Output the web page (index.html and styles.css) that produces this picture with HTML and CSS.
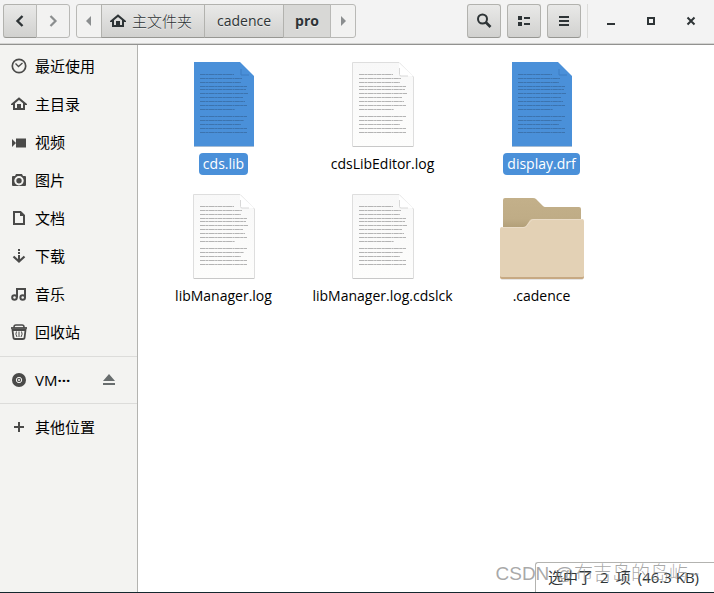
FILE: index.html
```html
<!DOCTYPE html>
<html lang="zh-CN">
<head>
<meta charset="utf-8">
<title>pro</title>
<link rel="stylesheet" href="styles.css">
</head>
<body>
<svg class="defs" aria-hidden="true">
  <defs>
    <symbol id="home" viewBox="0 0 16 16"><path d="M8 1.200 0 8v1h2v5h12V9h2V8L8 1.200zm0 2.700 4 3.400V12h-2V8H6v4H4V7.300z" fill="currentColor" fill-rule="evenodd"/><path d="M7 9h2v4H7z" fill="currentColor"/></symbol>
    <linearGradient id="back-shade" x1="0" y1="0" x2="0" y2="1"><stop offset="0" stop-color="#c3b08a"/><stop offset=".6" stop-color="#bfac86"/><stop offset="1" stop-color="#aa966f"/></linearGradient>
    <linearGradient id="paper" x1="0" y1="0" x2="0" y2="1"><stop offset="0" stop-color="#f8f8f8"/><stop offset="1" stop-color="#fdfdfc"/></linearGradient>
    <symbol id="writing" viewBox="0 0 64 88">
      <g fill="none" stroke="currentColor" stroke-width="1" stroke-dasharray="5 .4 3 .3 6 .4 2 .3">
        <path d="M8 13.500h34M8 17.500h42M8 21.500h41M8 25.500h47M8 28.500h46M8 32.500h48M8 36.500h43M8 40.500h45M8 44.500h47M8 48.500h35M8 55.500h47M8 59.500h44M8 63.500h41M8 67.500h47M8 71.500h47"/>
      </g>
    </symbol>
    <symbol id="doc" viewBox="0 0 64 88">
      <path d="M2 1.500h46L62.500 16v69.500h-61V1.500z" fill="url(#paper)" stroke="#dedede"/>
      <path d="M48 2v11.500q0 1.500 1.500 1.500H62z" fill="#fff"/>
      <path d="M48.500 7v6.500q0 1.500 1.500 1.500h7" fill="none" stroke="#d8d8d8"/>
      <path d="M2 85.500h60" stroke="#c8c8c8"/>
      <use href="#writing" color="#b4b4b4"/>
    </symbol>
    <symbol id="doc-selected" viewBox="0 0 64 88">
      <path d="M2 3h46l14 14v69H2z" fill="#386ba2" opacity=".45"/>
      <path d="M2 1h46l14 14v70H2z" fill="#4a90d9"/>
      <path d="M49 8v6h8" fill="none" stroke="#3d7dc2"/>
      <use href="#writing" color="#3c73ae"/>
    </symbol>
  </defs>
</svg>
<div class="window">
  <header class="bar">
    <div class="group">
      <button class="btn nav" aria-label="后退"><svg width="16" height="16"><path d="M10.500 3 5.500 8l5 5" fill="none" stroke="currentColor" stroke-width="2.400"/></svg></button>
      <button class="btn nav flat" aria-label="前进" disabled><svg width="16" height="16"><path d="m5.500 3 5 5-5 5" fill="none" stroke="currentColor" stroke-width="2.200"/></svg></button>
    </div>
    <nav class="group path">
      <button class="btn arrow flat" aria-label="向左"><svg width="8" height="10"><path d="M6 0v10L1 5z" fill="currentColor"/></svg></button>
      <button class="btn crumb home"><svg width="16" height="16"><use href="#home"/></svg><span>主文件夹</span></button>
      <button class="btn crumb">cadence</button>
      <button class="btn crumb current">pro</button>
      <button class="btn arrow flat" aria-label="向右"><svg width="8" height="10"><path d="M2 0v10l5-5z" fill="currentColor"/></svg></button>
    </nav>
    <div class="tools">
      <button class="btn tool" aria-label="搜索"><svg width="16" height="16"><g fill="none" stroke="currentColor"><circle cx="6.500" cy="6" r="4.500" stroke-width="2"/><path d="m9.500 9 5 5" stroke-width="2.600"/></g></svg></button>
      <button class="btn tool" aria-label="列表视图"><svg width="16" height="16"><path d="M2 3h4v4H2zM2 9h4v4H2zM8 4h6v2H8zM8 10h6v2H8z" fill="currentColor"/></svg></button>
      <button class="btn tool" aria-label="菜单"><svg width="16" height="16"><path d="M3 3h10v2H3zM3 7h10v2H3zM3 11h10v2H3z" fill="currentColor"/></svg></button>
    </div>
    <div class="controls">
      <button aria-label="最小化"><svg width="16" height="16"><path d="M4 10h8v2H4z" fill="currentColor"/></svg></button>
      <button aria-label="最大化"><svg width="16" height="16"><path d="M5 5h6v6H5z" fill="none" stroke="currentColor" stroke-width="2"/></svg></button>
      <button aria-label="关闭"><svg width="16" height="16"><path d="m4.500 4.500 7 7m0-7-7 7" stroke="currentColor" stroke-width="2"/></svg></button>
    </div>
  </header>
  <div class="body">
    <aside class="side">
      <ul>
        <li><svg width="16" height="16"><g fill="none" stroke="currentColor"><circle cx="8" cy="8" r="6.700" stroke-width="1.700"/><path d="M4.500 5.500 7.500 8.500l4-3.500" stroke-width="1.300"/></g></svg>最近使用</li>
        <li><svg width="16" height="16"><use href="#home"/></svg>主目录</li>
        <li><svg width="16" height="16"><path d="M5 4.500h10v9H5zM1 5l4 4-4 4z" fill="currentColor"/></svg>视频</li>
        <li><svg width="16" height="16"><path fill-rule="evenodd" d="M5 2h6l1 2h2q1 0 1 1v8q0 1-1 1H2q-1 0-1-1V5q0-1 1-1h2zm3 2.500a4.200 4.200 0 1 0 0 8.400 4.200 4.200 0 0 0 0-8.400zm0 1.500a2.700 2.700 0 1 1 0 5.400A2.700 2.700 0 0 1 8 6z" fill="currentColor"/><circle cx="8" cy="8.700" r="4" fill="none" stroke="#f3f3f1" stroke-width="1.400"/><circle cx="8" cy="8.700" r="1.200" fill="currentColor"/></svg>图片</li>
        <li><svg width="16" height="16"><path d="M3 2h6.500L13 5.500V14H3z" fill="none" stroke="currentColor" stroke-width="2"/><path d="M9 2v4h4z" fill="currentColor"/></svg>文档</li>
        <li><svg width="16" height="16"><path d="M7 1h2v2H7zM7 4h2v2H7zM7 7h2v5H7z" fill="currentColor"/><path d="M2.500 8.500 8 13.500l5.500-5" fill="none" stroke="currentColor" stroke-width="2.200"/></svg>下载</li>
        <li><svg width="16" height="16"><g fill="none" stroke="currentColor" stroke-width="2"><circle cx="3.500" cy="11.500" r="2.300"/><circle cx="11.700" cy="11.500" r="2.300"/><path d="M6 11.500V3h8v8.500"/></g></svg>音乐</li>
        <li><svg width="16" height="16"><g fill="none" stroke="currentColor"><path d="M0 4h16" stroke-width="1.800"/><path d="M3 4V3q0-2 2-2h6q2 0 2 2v1" stroke-width="1.500"/><path d="M1.500 6h13L13.500 14q-.2 1-1.500 1H4q-1.300 0-1.500-1z" stroke-width="1.800"/><path d="M5.500 7.500q-1.500 2.500.5 5.500M8 7.500V13M10.500 7.500q1.500 2.500-.5 5.500"/></g></svg>回收站</li>
      </ul>
      <ul>
        <li><svg width="16" height="16"><circle cx="8" cy="8" r="7" fill="currentColor"/><g fill="none" stroke="#f3f3f1"><circle cx="8" cy="8" r="2.700"/><circle cx="8" cy="8" r=".8"/></g></svg>VM<span>···</span><button class="eject" aria-label="弹出"><svg width="16" height="16"><path d="M8 2 2 9h12zM2 11h12v2H2z" fill="currentColor"/></svg></button></li>
      </ul>
      <ul>
        <li><svg width="16" height="16"><path d="M7 3h2v4h4v2H9v4H7V9H3V7h4z" fill="currentColor"/></svg>其他位置</li>
      </ul>
    </aside>
    <main class="content">
      <ul class="files">
        <li class="selected"><svg width="64" height="88"><use href="#doc-selected"/></svg><span>cds.lib</span></li>
        <li><svg width="64" height="88"><use href="#doc"/></svg><span>cdsLibEditor.log</span></li>
        <li class="selected"><svg width="64" height="88"><use href="#doc-selected"/></svg><span>display.drf</span></li>
        <li><svg width="64" height="88"><use href="#doc"/></svg><span>libManager.log</span></li>
        <li><svg width="64" height="88"><use href="#doc"/></svg><span>libManager.log.cdslck</span></li>
        <li><svg width="88" height="88"><path d="M5 40V7q0-2 2-2h28q2 0 3 1l7 7q1 1 2 1h34q2 0 2 2v24z" fill="url(#back-shade)"/><path d="M3 84h82v2q0 1-1 1H4q-1 0-1-1z" fill="#000" opacity=".1"/><path d="M2 36q0-2 2-2h21q2 0 3-1l4-6q1-1 3-1h49q2 0 2 2v56q0 2-2 2H4q-2 0-2-2z" fill="#e3d1b5"/><path d="M2 83v1q0 2 2 2h80q2 0 2-2v-1q0 1-2 1H4q-2 0-2-1z" fill="#c7a983"/><path d="M4 34.500h22q2 0 3-2l4-5q1-1 3-1h48" fill="none" stroke="#eadcc7"/></svg><span>.cadence</span></li>
      </ul>
      <div class="status"><span>选中了</span><span>2</span><span>项</span><span>(46.3 KB)</span></div>
      <div class="watermark">CSDN @布吉岛的岛屿~</div>
    </main>
  </div>
</div>
</body>
</html>
```
FILE: styles.css
```css
* { box-sizing: border-box; }
body {
  margin: 0;
  background: #14272e;
  color: #000;
  font: 14px/22px "Open Sans", "Noto Sans CJK SC", sans-serif;
}
ul { list-style: none; margin: 0; padding: 0; }
svg { display: block; flex: none; }
button { font: inherit; color: inherit; padding: 0; margin: 0; }
.defs { position: absolute; width: 0; height: 0; }
.window {
  display: flex;
  flex-direction: column;
  min-height: 100vh;
  border-bottom: 1px solid #14272e;
}
.bar {
  display: flex;
  align-items: center;
  height: 45px;
  padding: 0 3px 3px;
  background: #f3f3f3;
  border-bottom: 1px solid #929290;
  box-shadow: inset 0 -1px #d4d4d2;
  color: #2e3436;
}
.group { display: flex; margin-right: 6px; }
.btn {
  display: flex;
  align-items: center;
  justify-content: center;
  height: 34px;
  border: 1px solid #b2b2ae;
  border-bottom-color: #979793;
  border-radius: 3px;
  background: linear-gradient(#e9e9e8, #d1d1cf);
  text-shadow: 0 1px #fff8;
}
.group .btn { border-radius: 0; }
.group .btn + .btn { margin-left: -1px; }
.group .btn:first-child { border-radius: 3px 0 0 3px; }
.group .btn:last-child { border-radius: 0 3px 3px 0; }
.nav { width: 34px; }
.btn.flat { background: #f2f2f1; border-color: #b9b9b6; color: #8b8e8f; }
.arrow { width: 26px; }
.crumb { gap: 6px; padding: 0 12px; }
.crumb.home { padding: 0 12px 0 8px; }
.crumb span { font-size: 15px; font-weight: 300; }
.crumb.current { padding: 0 11px; background: #d8d8d6; border-color: #b2b2ae; font-weight: 700; }
.tools { display: flex; gap: 6px; margin-left: auto; padding-right: 6px; }
.tool { width: 34px; }
.controls { display: flex; border-left: 1px solid #dcdcda; padding-left: 3px; }
.controls button {
  display: flex;
  align-items: center;
  justify-content: center;
  width: 40px;
  height: 34px;
  border: 0;
  background: none;
}
.body { display: flex; flex: 1; }
.side {
  flex: none;
  width: 138px;
  padding-top: 2px;
  background: #f3f3f1;
  border-right: 1px solid #b3b3b0;
}
.side ul + ul { border-top: 1px solid #dcdcda; padding-top: 4px; }
.side ul { padding-bottom: 4px; }
.side ul:first-child { padding-bottom: 5px; }
.side li {
  display: flex;
  align-items: center;
  height: 38px;
  padding: 0 20px 0 11px;
  font-size: 15px;
  font-family: "Open Sans", "Noto Sans CJK SC", sans-serif;
}
.side li > svg { margin-right: 8px; color: #4a4a49; }
.side li > span { font-weight: 700; }
.eject { margin-left: auto; border: 0; background: none; color: #686d6e; }
.content { position: relative; flex: 1; background: #fff; }
.files {
  display: grid;
  grid-template-columns: repeat(auto-fill, 159px);
  grid-auto-rows: 132px;
  padding: 16px 6px;
}
.files li { display: flex; flex-direction: column; align-items: center; gap: 4px; }
.files span { padding: 0 4px; border-radius: 4px; }
.selected span { background: #4a90d9; color: #fff; }
.status {
  position: absolute;
  right: 0;
  bottom: 0;
  display: flex;
  gap: 7px;
  height: 30px;
  padding: 3px 15px 0 12px;
  border: solid #b3b3b0;
  border-width: 1px 0 0 1px;
  border-radius: 3px 0 0;
  background: #fff;
  color: #2e3436;
  font-size: 15px;
}
.watermark {
  position: absolute;
  right: 15px;
  bottom: 5px;
  font: 300 19px/26px "Liberation Sans", "Noto Sans CJK SC", sans-serif;
  color: #888b;
}
```
